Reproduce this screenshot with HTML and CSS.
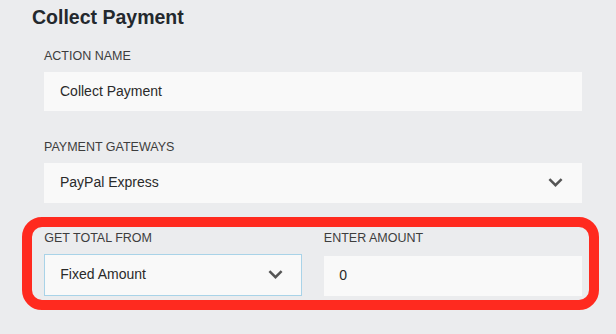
FILE: index.html
```html
<!DOCTYPE html>
<html lang="en">
<head>
<meta charset="utf-8">
<title>Collect Payment</title>
<link rel="stylesheet" href="styles.css">
</head>
<body>
<div class="panel">
  <h1 class="title">Collect Payment</h1>
  <div class="form">
    <div class="group group-first">
      <div class="label">ACTION NAME</div>
      <div class="field field-input"><span class="value">Collect Payment</span></div>
    </div>
    <div class="group">
      <div class="label">PAYMENT GATEWAYS</div>
      <div class="field field-select">
        <span class="value">PayPal Express</span>
        <svg class="chev" width="15" height="9" viewBox="0 0 15 9"><polyline points="1.4,1.2 7.5,7.2 13.6,1.2" fill="none" stroke="#555" stroke-width="2.5"/></svg>
      </div>
    </div>
    <div class="highlight">
      <div class="row">
        <div class="col">
          <div class="label">GET TOTAL FROM</div>
          <div class="field field-select field-focus">
            <span class="value">Fixed Amount</span>
            <svg class="chev" width="15" height="9" viewBox="0 0 15 9"><polyline points="1.4,1.2 7.5,7.2 13.6,1.2" fill="none" stroke="#555" stroke-width="2.5"/></svg>
          </div>
        </div>
        <div class="col">
          <div class="label">ENTER AMOUNT</div>
          <div class="field field-amount"><span class="value">0</span></div>
        </div>
      </div>
    </div>
  </div>
</div>
</body>
</html>
```

FILE: styles.css
```css
html, body {
  margin: 0;
  padding: 0;
  background: #ebecee;
}

body {
  font-family: "Liberation Sans", Arial, sans-serif;
  width: 616px;
  height: 334px;
  overflow: hidden;
}

.panel {
  padding-top: 4.5px;
}

.title {
  margin: 0;
  padding-left: 32px;
  font-size: 19.5px;
  line-height: 24px;
  font-weight: bold;
  color: #23282d;
}

.form {
  padding: 0 34.3px 0 44px;
}

.group-first {
  margin-top: 19.5px;
}

.group {
  margin-bottom: 27.6px;
}

.group:nth-child(2) {
  margin-bottom: 14px;
}

.label {
  font-size: 12.5px;
  line-height: 16px;
  color: #3d3d3d;
  margin-bottom: 8px;
}

.field {
  display: flex;
  align-items: center;
  justify-content: space-between;
  box-sizing: border-box;
  background: #f9f9f9;
  color: #2a2a2a;
  font-size: 14px;
  padding: 0 18.5px 2px 16px;
}

.field-input {
  height: 39px;
}

.field-select {
  height: 40px;
}

.chev {
  display: block;
  margin-top: 2px;
}

.highlight {
  margin: 0 -17.6px 0 -21.7px;
  border: 10px solid #ff2a1f;
  border-radius: 20px;
  padding: 3.5px 7.6px 4px 12px;
}

.row {
  display: grid;
  grid-template-columns: 1fr 1fr;
  column-gap: 21.7px;
}

.col {
  display: flex;
  flex-direction: column;
  justify-content: space-between;
}

.field-focus {
  height: 41.5px;
  border: 1px solid #a9d3e8;
  padding-left: 15px;
  padding-right: 18px;
}

.field-amount {
  height: 40px;
  padding-left: 15.3px;
}
```
